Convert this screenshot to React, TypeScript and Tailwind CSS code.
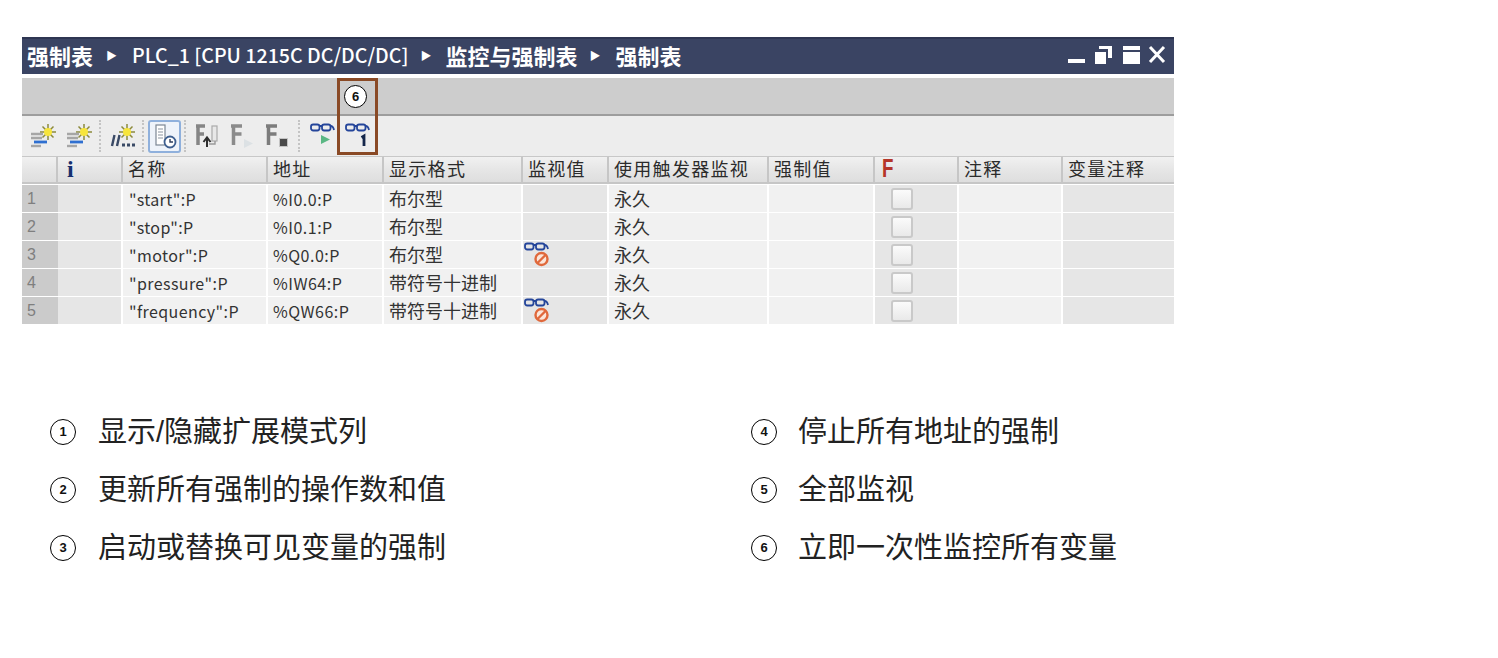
import React from "react";

const cjk = "font-['Noto_Sans_CJK_SC','Noto_Sans',sans-serif]";
const columns = "grid grid-cols-[36px_65px_145px_116px_139px_86px_160px_106px_84px_104px_111px]";

const rows = [
  { n: 1, name: '"start":P', addr: "%I0.0:P", fmt: "布尔型", mon: false },
  { n: 2, name: '"stop":P', addr: "%I0.1:P", fmt: "布尔型", mon: false },
  { n: 3, name: '"motor":P', addr: "%Q0.0:P", fmt: "布尔型", mon: true },
  { n: 4, name: '"pressure":P', addr: "%IW64:P", fmt: "带符号十进制", mon: false },
  { n: 5, name: '"frequency":P', addr: "%QW66:P", fmt: "带符号十进制", mon: true },
];

const Glasses = () => (
  <g fill="none" stroke="#24459a" strokeWidth="1.800">
    <rect x="1" y="1.500" width="8.500" height="6" rx="2.200" />
    <rect x="12" y="1.500" width="8.500" height="6" rx="2.200" />
    <path d="M9.500 3h2.500M20.500 3c2 0 3 1.500 3.500 4" />
  </g>
);

const NoMonitor = () => (
  <svg width="27" height="26" viewBox="0 0 27 26" className="ml-[1px]">
    <Glasses />
    <circle cx="17.500" cy="17" r="6" fill="#fbe6da" stroke="#e0693c" strokeWidth="2.400" />
    <path d="M13.500 21l8-8" stroke="#e0693c" strokeWidth="2.400" />
  </svg>
);

const Sun = ({ x, y }: { x: number; y: number }) => (
  <g transform={`translate(${x} ${y})`}>
    <path d="M0-8V8M-8 0H8M-5.500-5.500L5.500 5.500M-5.500 5.500L5.500-5.500" stroke="#8c8a3c" strokeWidth="1.500" />
    <circle r="4" fill="#f7e53b" />
  </g>
);

const NewList = () => (
  <svg width="28" height="24" viewBox="0 0 28 24">
    <Sun x={19} y={8} />
    <path d="M2 10h12M2 14h11" stroke="#a6a6a6" strokeWidth="2.400" />
    <path d="M5 18h13" stroke="#2f6fd0" strokeWidth="2.800" />
    <path d="M2 22h10" stroke="#a6a6a6" strokeWidth="2.400" />
  </svg>
);

const Dots = () => (
  <svg width="28" height="24" viewBox="0 0 28 24">
    <Sun x={18} y={8} />
    <path d="M3 22l2.500-11M8 22l2.500-11" stroke="#3a4a66" strokeWidth="2.400" />
    <path d="M13 21h3M18 21h3M23 21h3" stroke="#3a4a66" strokeWidth="3" />
  </svg>
);

const ClockList = () => (
  <div className="w-[33px] h-[33px] rounded-[3px] border-2 border-[#8fb0dc] bg-[#eef3fa] flex items-center justify-center">
    <svg width="26" height="26" viewBox="0 0 26 26">
      <rect x="4" y="2" width="9" height="20" fill="#fff" stroke="#7c8794" strokeWidth="1.200" />
      <path d="M6 6h5M6 9h5M6 12h5M6 15h5" stroke="#8a94a0" strokeWidth="1.200" />
      <circle cx="18" cy="19" r="5.500" fill="#fff" stroke="#3e5f8f" strokeWidth="1.800" />
      <path d="M18 16v3h3" fill="none" stroke="#2d3d5c" strokeWidth="1.400" />
    </svg>
  </div>
);

const ForceUpdate = () => (
  <svg width="26" height="26" viewBox="0 0 26 26">
    <path d="M2 3h9M4 3v19M4 11h6" fill="none" stroke="#858585" strokeWidth="3.500" />
    <rect x="18" y="3" width="5" height="15" fill="#e8e8e8" stroke="#aaa" strokeWidth="1.200" />
    <path d="M13 24v-9M9.500 19l3.500-4.500 3.500 4.500" fill="none" stroke="#2e2e2e" strokeWidth="2" />
    <path d="M15 21h6v-3" fill="none" stroke="#999" strokeWidth="1.400" />
  </svg>
);

const ForceStart = () => (
  <svg width="26" height="26" viewBox="0 0 26 26">
    <path d="M2 3h11M4.500 3v19M4.500 11h8" fill="none" stroke="#8b8b8b" strokeWidth="3.500" />
    <path d="M15 16l9 4.500-9 4.500z" fill="#dce1e4" />
  </svg>
);

const ForceStop = () => (
  <svg width="26" height="26" viewBox="0 0 26 26">
    <path d="M2 3h11M4.500 3v19M4.500 11h8" fill="none" stroke="#7c7c7c" strokeWidth="3.500" />
    <rect x="15.500" y="15.500" width="8" height="8" fill="#4a4a4a" stroke="#c4c4c4" />
  </svg>
);

const MonitorAll = () => (
  <svg width="26" height="26" viewBox="0 0 26 26">
    <Glasses />
    <path d="M11 12l9 4.500-9 4.500z" fill="#5bb784" />
  </svg>
);

const MonitorOnce = () => (
  <svg width="26" height="26" viewBox="0 0 26 26">
    <Glasses />
    <path d="M16.500 14.500l2.500-1.500v10" fill="none" stroke="#14264a" strokeWidth="2.800" />
  </svg>
);

const Sep = () => <div className="h-[32px] border-l-2 border-dotted border-[#c4c4c4]" />;

const CircleNum = ({ n, size = "w-[26px] h-[26px]" }: { n: number; size?: string }) => (
  <div className={`${size} shrink-0 rounded-full border-[1.5px] border-black bg-white flex items-center justify-center font-['Liberation_Sans',sans-serif] font-bold text-[13px] text-[#111]`}>
    {n}
  </div>
);

const Head = ({ last, children }: { last?: boolean; children?: React.ReactNode }) => (
  <div className={`h-[28px] pl-[5px] pb-[2px] flex items-center border-t border-b-2 border-t-[#c8c8c8] border-b-[#c6c6c6] bg-gradient-to-b from-[#f1f1f1] via-[#e6e6e6] to-[#dedede] text-[18px] tracking-[1.300px] text-[#2b2b2b] whitespace-nowrap ${last ? "" : "border-r-2 border-r-[#c6c6c6]"}`}>
    {children}
  </div>
);

const Cell = ({ dark, last, children }: { dark?: boolean; last?: boolean; children?: React.ReactNode }) => (
  <div className={`h-[27px] mb-[1px] pl-[6px] flex items-center text-[16px] text-[#333] whitespace-nowrap ${last ? "" : "mr-[2px]"} ${dark ? "bg-[#e6e6e6]" : "bg-[#f1f1f1]"}`}>
    {children}
  </div>
);

const legend = [
  [1, "显示/隐藏扩展模式列", 4, "停止所有地址的强制"],
  [2, "更新所有强制的操作数和值", 5, "全部监视"],
  [3, "启动或替换可见变量的强制", 6, "立即一次性监控所有变量"],
] as const;

export default function App() {
  return (
    <div className={`w-[1498px] h-[658px] bg-white pl-[22px] pt-[37px] overflow-hidden ${cjk}`}>
      <div className="relative w-[1152px]">
        <div className="h-[37px] bg-[#3a4463] border-t-2 border-[#2e3652] pl-[5px] pr-[8px] pb-[3px] flex items-center text-white text-[22px] font-bold">
          <span>强制表</span>
          <span className="ml-[13px] mr-[15px] text-[11px]">▶</span>
          <span className="font-medium text-[19.600px]">PLC_1 [CPU 1215C DC/DC/DC]</span>
          <span className="ml-[12px] mr-[14px] text-[11px]">▶</span>
          <span>监控与强制表</span>
          <span className="ml-[12px] mr-[15px] text-[11px]">▶</span>
          <span>强制表</span>
          <svg width="98" height="24" viewBox="0 0 98 24" fill="#fff" className="ml-auto">
            <rect x="0" y="16" width="17" height="4" />
            <rect x="27" y="9" width="11" height="12" />
            <path d="M31 7V3h13v12h-4V6h-9z" />
            <rect x="55" y="3" width="17" height="4" />
            <rect x="55" y="9" width="17" height="12" />
            <path d="M82 4l14 15M96 4L82 19" stroke="#fff" strokeWidth="3" fill="none" />
          </svg>
        </div>
        <div className="mt-[4px] h-[38px] bg-[#cdcdcd] border-b-2 border-[#9d9d9d]" />
        <div className="h-[40px] bg-[#ededed] pl-[7px] flex items-center">
          <NewList />
          <div className="w-[8px]" />
          <NewList />
          <div className="w-[6px]" />
          <Sep />
          <div className="w-[8px]" />
          <Dots />
          <div className="w-[5px]" />
          <Sep />
          <div className="w-[4px]" />
          <ClockList />
          <div className="w-[3px]" />
          <Sep />
          <div className="w-[8px]" />
          <ForceUpdate />
          <div className="w-[9px]" />
          <ForceStart />
          <div className="w-[9px]" />
          <ForceStop />
          <div className="w-[8px]" />
          <Sep />
          <div className="w-[10px]" />
          <MonitorAll />
          <div className="w-[9px]" />
          <MonitorOnce />
        </div>
        <div className={columns}>
          <Head />
          <Head>
            <span className="ml-[4px] leading-none font-['Liberation_Serif',serif] font-bold text-[24px] text-[#16306e]">i</span>
          </Head>
          <Head>名称</Head>
          <Head>地址</Head>
          <Head>显示格式</Head>
          <Head>监视值</Head>
          <Head>使用触发器监视</Head>
          <Head>强制值</Head>
          <Head>
            <span className="ml-[2px] leading-none inline-block origin-left scale-x-75 font-['Liberation_Sans',sans-serif] font-bold text-[25px] text-[#b5362a]">F</span>
          </Head>
          <Head>注释</Head>
          <Head last>变量注释</Head>
        </div>
        <div className={`${columns} pt-[1px]`}>
          {rows.map((r) => (
            <React.Fragment key={r.n}>
              <div className="h-[27px] mb-[1px] pl-[5px] flex items-center bg-[#cbcbcb] text-[16px] text-[#7f7f7f] font-['Liberation_Sans',sans-serif]">
                {r.n}
              </div>
              <Cell dark />
              <Cell><span className="tracking-[0.4px]">{r.name}</span></Cell>
              <Cell><span className="-ml-[1px] tracking-[0.5px]">{r.addr}</span></Cell>
              <Cell><span className="-ml-[1px] text-[18px]">{r.fmt}</span></Cell>
              <Cell dark>{r.mon && <div className="-ml-[6px] h-[26px]"><NoMonitor /></div>}</Cell>
              <Cell><span className="-ml-[1px] text-[18px]">永久</span></Cell>
              <Cell />
              <Cell dark>
                <div className="ml-[10px] w-[22px] h-[22px] rounded-[3px] border-2 border-[#c9c9c9] bg-gradient-to-b from-[#fbfbfb] to-[#e9e9e9]" />
              </Cell>
              <Cell />
              <Cell dark last />
            </React.Fragment>
          ))}
        </div>
        <div className="absolute left-[315px] top-[41px] w-[41px] h-[77px] border-[3px] border-[#8a4a26] flex justify-center pt-[4px] pr-[4px]">
          <CircleNum n={6} size="w-[23px] h-[23px]" />
        </div>
      </div>
      <div className="mt-[91px] ml-[28px] grid grid-cols-[701px_1fr] gap-y-[25px] font-['Liberation_Sans','Noto_Sans_CJK_SC',sans-serif] text-[29px] leading-[33px] text-[#222]">
        {legend.map((l) => (
          <React.Fragment key={l[0]}>
            <div className="flex items-center gap-[22px]">
              <div className="-mt-[2px]"><CircleNum n={l[0]} /></div>
              <span>{l[1]}</span>
            </div>
            <div className="flex items-center gap-[21px]">
              <div className="-mt-[2px]"><CircleNum n={l[2]} /></div>
              <span>{l[3]}</span>
            </div>
          </React.Fragment>
        ))}
      </div>
    </div>
  );
}
